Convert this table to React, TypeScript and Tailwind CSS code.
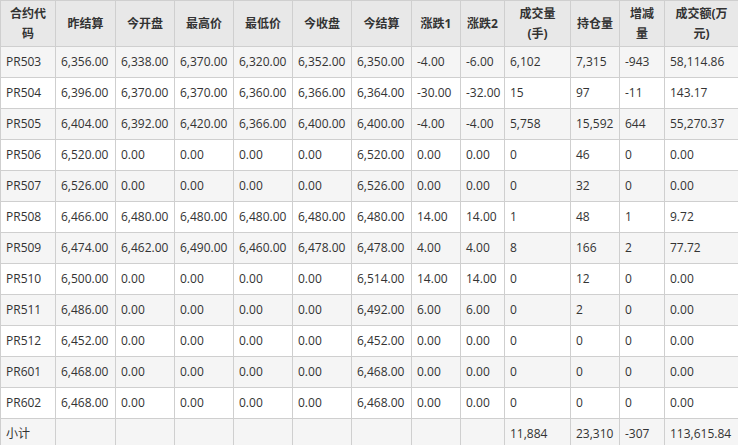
const cols = [55, 60, 59, 59, 59, 59, 60, 49, 44, 66, 49, 45, 74];

// header labels, split where the original wraps
const headers: string[][] = [
  ["合约代", "码"],
  ["昨结算"],
  ["今开盘"],
  ["最高价"],
  ["最低价"],
  ["今收盘"],
  ["今结算"],
  ["涨跌1"],
  ["涨跌2"],
  ["成交量", "(手)"],
  ["持仓量"],
  ["增减", "量"],
  ["成交额(万", "元)"],
];

const rows: string[][] = [
  ["PR503", "6,356.00", "6,338.00", "6,370.00", "6,320.00", "6,352.00", "6,350.00", "-4.00", "-6.00", "6,102", "7,315", "-943", "58,114.86"],
  ["PR504", "6,396.00", "6,370.00", "6,370.00", "6,360.00", "6,366.00", "6,364.00", "-30.00", "-32.00", "15", "97", "-11", "143.17"],
  ["PR505", "6,404.00", "6,392.00", "6,420.00", "6,366.00", "6,400.00", "6,400.00", "-4.00", "-4.00", "5,758", "15,592", "644", "55,270.37"],
  ["PR506", "6,520.00", "0.00", "0.00", "0.00", "0.00", "6,520.00", "0.00", "0.00", "0", "46", "0", "0.00"],
  ["PR507", "6,526.00", "0.00", "0.00", "0.00", "0.00", "6,526.00", "0.00", "0.00", "0", "32", "0", "0.00"],
  ["PR508", "6,466.00", "6,480.00", "6,480.00", "6,480.00", "6,480.00", "6,480.00", "14.00", "14.00", "1", "48", "1", "9.72"],
  ["PR509", "6,474.00", "6,462.00", "6,490.00", "6,460.00", "6,478.00", "6,478.00", "4.00", "4.00", "8", "166", "2", "77.72"],
  ["PR510", "6,500.00", "0.00", "0.00", "0.00", "0.00", "6,514.00", "14.00", "14.00", "0", "12", "0", "0.00"],
  ["PR511", "6,486.00", "0.00", "0.00", "0.00", "0.00", "6,492.00", "6.00", "6.00", "0", "2", "0", "0.00"],
  ["PR512", "6,452.00", "0.00", "0.00", "0.00", "0.00", "6,452.00", "0.00", "0.00", "0", "0", "0", "0.00"],
  ["PR601", "6,468.00", "0.00", "0.00", "0.00", "0.00", "6,468.00", "0.00", "0.00", "0", "0", "0", "0.00"],
  ["PR602", "6,468.00", "0.00", "0.00", "0.00", "0.00", "6,468.00", "0.00", "0.00", "0", "0", "0", "0.00"],
  ["小计", "", "", "", "", "", "", "", "", "11,884", "23,310", "-307", "113,615.84"],
];

export default function App() {
  return (
    <div className="w-[738px] h-[445px] overflow-hidden bg-white">
      <table className="table-fixed border-collapse w-[739px] text-[12px] text-[#333] font-['Open_Sans','Noto_Sans_CJK_SC',sans-serif]">
        <colgroup>
          {cols.map((w, i) => (
            <col key={i} style={{ width: w }} />
          ))}
        </colgroup>
        <thead>
          <tr className="h-[46px] bg-[#e8e8e8]">
            {headers.map((h) => (
              <th
                key={h.join("")}
                className="border border-[#cfcfcf] px-[3px] text-center font-bold leading-[20px] align-middle whitespace-nowrap"
              >
                {h.map((line) => (
                  <div key={line}>{line}</div>
                ))}
              </th>
            ))}
          </tr>
        </thead>
        <tbody>
          {rows.map((r, i) => (
            <tr key={r[0]} className={i % 2 === 0 ? "h-[31px] bg-[#f5f5f5]" : "h-[31px] bg-white"}>
              {r.map((c, j) => (
                <td key={j} className="border border-[#cfcfcf] pl-[5px] pr-0 whitespace-nowrap align-middle">
                  {c}
                </td>
              ))}
            </tr>
          ))}
        </tbody>
      </table>
    </div>
  );
}
